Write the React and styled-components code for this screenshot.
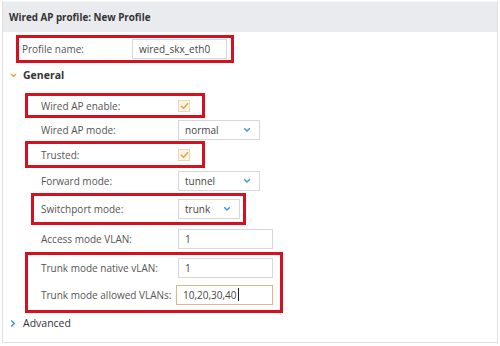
import React from 'react';
import styled, { createGlobalStyle } from 'styled-components';

const GlobalStyle = createGlobalStyle`
  body {
    margin: 0;
    background: #ffffff;
    font-family: "Open Sans", "Liberation Sans", sans-serif;
  }
`

const Panel = styled.div`
  box-sizing: border-box;
  margin: 1px 0 0 2px;
  width: 496px;
  height: 342px;
  border: 1px solid #dfe1e5;
  border-top: none;
  background: #ffffff;
`

const Header = styled.div`
  height: 30px;
  display: flex;
  align-items: center;
  padding-left: 6px;
  background: #e9ebef;
  border-top: 1px solid #f4f5f7;
  font-size: 9.8px;
  font-weight: 700;
  color: #333;
`

const Body = styled.div`
  display: flex;
  flex-direction: column;
  align-items: flex-start;
`

const Highlight = styled.div`
  box-sizing: border-box;
  display: flex;
  flex-direction: column;
  width: ${p => p.$width}px;
  height: ${p => p.$height}px;
  margin-left: ${p => p.$left}px;
  margin-top: ${p => p.$top || 0}px;
  border: 3px solid #d3111f;
  padding-left: ${p => p.$pad}px;
`

const Row = styled.div`
  display: flex;
  align-items: center;
  height: ${p => p.$height}px;
  margin-left: ${p => p.$left || 0}px;
  flex-shrink: 0;
`

const Label = styled.span`
  width: ${p => p.$width}px;
  font-size: 10px;
  color: #555;
  flex-shrink: 0;
`

const Field = styled.div`
  box-sizing: border-box;
  width: ${p => p.$width}px;
  height: 20px;
  display: flex;
  align-items: center;
  padding-left: 6px;
  border: 1px solid ${p => (p.$focus ? '#d9b88a' : '#d6d8dc')};
  background: #fff;
  font-size: 10px;
  color: #444;
`

const Caret = styled.span`
  display: inline-block;
  width: 1px;
  height: 13px;
  margin-left: 1px;
  background: #222;
`

const SelectBox = styled(Field)`
  justify-content: space-between;
  padding-right: 8px;
`

const Check = styled.div`
  box-sizing: border-box;
  width: 12px;
  height: 12px;
  border: 1px solid #ecd7b6;
  background: #fdf4e6;
  display: flex;
  align-items: center;
  justify-content: center;
`

const Section = styled.div`
  display: flex;
  align-items: center;
  height: ${p => p.$height}px;
  margin-top: ${p => p.$top || 0}px;
  padding-left: 7px;
  font-size: 10.5px;
  font-weight: ${p => (p.$bold ? 700 : 400)};
  color: #333;
`

const Chevron = styled.span`
  width: 13px;
  display: flex;
  align-items: center;
`

const ChevronDown = ({ color = '#3d9ad6', size = 8 }) => (
  <svg width={size} height={size * 0.7} viewBox="0 0 10 7">
    <path d="M1.5 1.5 L5 5 L8.5 1.5" fill="none" stroke={color} strokeWidth="1.8" />
  </svg>
)

const ChevronRight = () => (
  <svg width="6" height="9" viewBox="0 0 7 10">
    <path d="M1.5 1.5 L5 5 L1.5 8.5" fill="none" stroke="#3d9ad6" strokeWidth="1.8" />
  </svg>
)

const Tick = () => (
  <svg width="9" height="8" viewBox="0 0 10 8">
    <path d="M1 3.8 L4 6.5 L9 1" fill="none" stroke="#e8a23a" strokeWidth="1.6" />
  </svg>
)

const Select = ({ value, width }) => (
  <SelectBox $width={width}>
    <span>{value}</span>
    <ChevronDown />
  </SelectBox>
)

export default function App() {
  return (
    <>
      <GlobalStyle />
      <Panel>
        <Header>Wired AP profile: New Profile</Header>
        <Body>
          <Highlight $width={218} $height={28} $left={13} $top={3} $pad={3}>
            <Row $height={22}>
              <Label $width={110}>Profile name:</Label>
              <Field $width={95}>wired_skx_eth0</Field>
            </Row>
          </Highlight>

          <Section $bold $height={18} $top={3}>
            <Chevron><ChevronDown color="#e3a03a" size={7} /></Chevron>
            General
          </Section>

          <Highlight $width={180} $height={25} $left={22} $top={9} $pad={13}>
            <Row $height={19}>
              <Label $width={137}>Wired AP enable:</Label>
              <Check><Tick /></Check>
            </Row>
          </Highlight>
          <Row $height={23} $left={38}>
            <Label $width={137}>Wired AP mode:</Label>
            <Select value="normal" width={82} />
          </Row>
          <Highlight $width={180} $height={27} $left={22} $pad={13}>
            <Row $height={21}>
              <Label $width={137}>Trusted:</Label>
              <Check><Tick /></Check>
            </Row>
          </Highlight>
          <Row $height={25} $left={38}>
            <Label $width={137}>Forward mode:</Label>
            <Select value="tunnel" width={82} />
          </Row>
          <Highlight $width={215} $height={32} $left={28} $pad={7}>
            <Row $height={26}>
              <Label $width={137}>Switchport mode:</Label>
              <Select value="trunk" width={62} />
            </Row>
          </Highlight>
          <Row $height={27} $left={38}>
            <Label $width={137}>Access mode VLAN:</Label>
            <Field $width={95}>1</Field>
          </Row>
          <Highlight $width={258} $height={61} $left={22} $pad={13}>
            <Row $height={25}>
              <Label $width={137}>Trunk mode native vLAN:</Label>
              <Field $width={95}>1</Field>
            </Row>
            <Row $height={29}>
              <Label $width={135}>Trunk mode allowed VLANs:</Label>
              <Field $width={97} $focus>10,20,30,40<Caret /></Field>
            </Row>
          </Highlight>

          <Section $height={18} $top={1}>
            <Chevron><ChevronRight /></Chevron>
            Advanced
          </Section>
        </Body>
      </Panel>
    </>
  )
}
